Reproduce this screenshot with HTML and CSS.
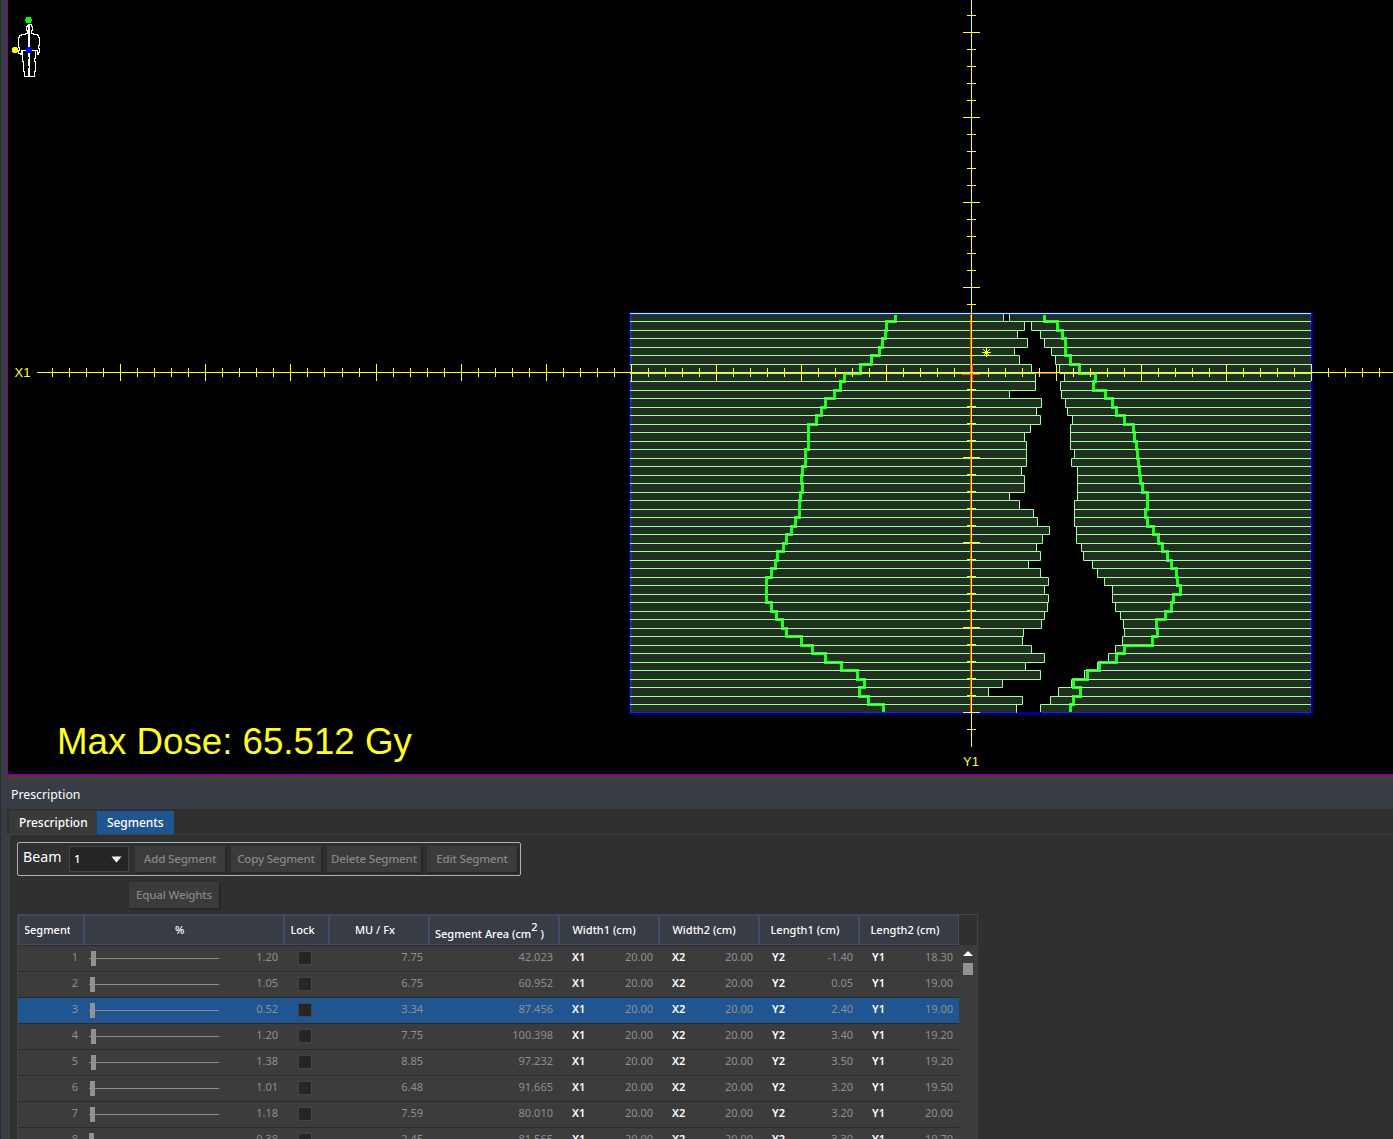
FILE: index.html
```html
<!DOCTYPE html>
<html lang="en">
<head>
<meta charset="utf-8">
<title>Beam Segments</title>
<link rel="stylesheet" href="styles.css">
</head>
<body>
<div class="app">
  <div class="gutter"></div>
  <main class="main">
    <section class="view">
      <svg class="bev" width="1386" height="774" viewBox="7 0 1386 774">
        <g class="body-icon" shape-rendering="crispEdges">
          <path d="M27.5 24.5h4v2h1v4h-1v3h2v1h4v1h1v2h1v8h-1v3h1v4h-1v2h-1v-4h-1v-1M27.5 24.5v2h-1v4h1v3h-2v1h-4v1h-2v2h-1v10h1v3h-1v3h2v1h1v-4h2M21.5 50.5h15M21.5 50.5v1h1v10h1v10h1v5h10v-5h1v-10h-1v-3h1v-8"/>
          <path d="M28.5 24V57M29.5 24V76M28.5 59V66M28.5 68V76"/>
          <circle class="dot-green" cx="28.500" cy="20" r="3.200"/>
          <circle class="dot-yellow" cx="15" cy="50" r="2.900"/>
          <circle class="dot-blue" cx="29" cy="50" r="2.900"/>
        </g>
        <g id="field"></g>
        <g id="axes"></g>
        <text class="axis-label" x="14.500" y="377">X1</text>
        <text class="axis-label" x="963" y="766">Y1</text>
        <text class="max-dose" x="57" y="754">Max Dose: 65.512 Gy</text>
      </svg>
    </section>
    <section class="panel">
      <h2 class="panel-title">Prescription</h2>
      <nav class="tabs">
        <span class="tab">Prescription</span>
        <span class="tab active">Segments</span>
      </nav>
      <div class="panel-body">
        <div class="toolbar">
          <span class="beam-label">Beam</span>
          <div class="select"><span>1</span><svg width="11" height="7" viewBox="0 0 11 7"><path d="M0.500 0.500h10l-5 6z" fill="#fff"/></svg></div>
          <button class="btn add">Add Segment</button>
          <button class="btn copy">Copy Segment</button>
          <button class="btn delete">Delete Segment</button>
          <button class="btn edit">Edit Segment</button>
        </div>
        <button class="btn equal">Equal Weights</button>
        <div class="grid">
          <div class="grid-main">
            <div class="row head">
              <span class="h seg"><b>Segment</b></span><span class="h pct">%</span><span class="h lock">Lock</span><span class="h mu">MU / Fx</span><span class="h area">Segment Area (cm<sup>2</sup>&nbsp;)</span><span class="h">Width1 (cm)</span><span class="h">Width2 (cm)</span><span class="h len">Length1 (cm)</span><span class="h len">Length2 (cm)</span>
            </div>
            <div id="rows"></div>
          </div>
          <div class="scroll">
            <svg width="10" height="5" viewBox="0 0 10 5"><path d="M0 5L5 0L10 5z" fill="#fff"/></svg>
            <div class="thumb"></div>
          </div>
        </div>
      </div>
    </section>
  </main>
</div>
<script src="app.js"></script>
</body>
</html>
```
FILE: styles.css
```css
* { box-sizing: border-box; }
body {
  margin: 0;
  background: #303030;
  color: #fff;
  font: 12px "Noto Sans", "Open Sans", sans-serif;
}
.app { display: flex; width: 1393px; height: 1139px; overflow: hidden; }
.gutter { width: 7px; flex: none; background: #383c44; border-left: 1px solid #2b2b2b; }
.main { width: 1386px; flex: none; display: flex; flex-direction: column; }
.view {
  height: 776px;
  flex: none;
  background: #000;
  border-bottom: 2px solid #900090;
  box-shadow: inset 1px 0 #900090;
}
.bev { display: block; }
.body-icon path { fill: none; stroke: #fff; }
.dot-green { fill: #00ff00; }
.dot-yellow { fill: #ffff00; }
.dot-blue { fill: #0000ff; }
.edge { fill: #000090; }
.edge-soft { fill: #203090; }
.leaf { fill: #202f20; stroke: #a0ffa0; }
.contour { fill: none; stroke: #20ff20; stroke-width: 3; }
.contour-line { fill: none; stroke: #78ff78; }
.axis { fill: none; stroke: #ffff20; }
.red { fill: none; stroke: #ff4030; }
.axis-label { fill: #ffff20; font: 13px "Liberation Sans", Arial, sans-serif; }
.max-dose { fill: #ffff20; font: 36.700px "Liberation Sans", Arial, sans-serif; }

.panel { flex: 1; min-height: 0; display: flex; flex-direction: column; padding-top: 6px; background: #404040; }
.panel-title {
  height: 27px;
  margin: 0;
  padding-left: 4px;
  flex: none;
  background: #383c45;
  font-size: 12.300px;
  font-weight: 400;
  line-height: 26px;
}
.tabs { display: flex; flex: none; height: 25px; padding: 2px 0 0 2px; background: #303030; }
.tab { width: 88px; padding-left: 10px; font-weight: 500; font-size: 11.900px; line-height: 23px; background: #3a3a3a; }
.tab.active { width: 77px; background: #1f5591; }
.panel-body {
  flex: 1;
  min-height: 0;
  overflow: hidden;
  margin-left: 2px;
  padding: 7px 0 0 7px;
  border-left: 1px solid #404040;
  border-top: 1px solid #404040;
  background: #303030;
}
.toolbar { display: flex; width: 504px; height: 34px; padding: 3px 0 0 5px; border: 1px solid #b0b0b0; border-radius: 2px; }
.beam-label { width: 46px; font-size: 14.200px; line-height: 21px; }
.select {
  display: flex;
  align-items: center;
  justify-content: space-between;
  width: 60px;
  height: 26px;
  padding: 0 6px 1px 4px;
  border: 1px solid #444;
  background: #252525;
  font-size: 11.500px;
  font-weight: 500;
}
.select svg { margin-top: 1px; }
.btn {
  height: 26px;
  padding: 0;
  border: 0;
  background: #3b3b3b;
  box-shadow: 1px 1px 2px #202020;
  color: #878787;
  font: 500 11.600px/26px "Noto Sans", sans-serif;
  letter-spacing: -0.200px;
  white-space: nowrap;
}
.add { width: 90px; margin-left: 6px; }
.copy { width: 90px; margin-left: 6px; }
.delete { width: 94px; margin-left: 6px; }
.edit { width: 90px; margin-left: 6px; }
.equal { display: block; width: 90px; margin: 6px 0 0 112px; }
.grid { display: flex; width: 961px; height: 300px; margin-top: 6px; border: 1px solid #444; background: #303030; }
.grid-main { width: 941px; flex: none; }
.row {
  display: grid;
  grid-template-columns: 66px 200px 45px 100px 130px 100px 100px 100px 100px;
  height: 26px;
  background: #3c3c3c;
  border-top: 1px solid #2b2b2b;
  font-size: 11px;
  line-height: 21px;
}
.head { height: 30px; border: 0; background: #383c45; font-weight: 500; line-height: 27px; }
.h { border: 1px solid #434c66; padding-left: 12.500px; white-space: nowrap; overflow: hidden; }
.h b { display: block; width: 45px; overflow: hidden; font-weight: 500; text-indent: -1px; }
.h.seg { padding-left: 6px; }
.h.pct { padding-left: 90px; }
.h.lock { padding-left: 5.500px; }
.h.mu { padding-left: 25px; }
.h.area { padding-left: 5px; line-height: 36px; }
.h.len { padding-left: 10.500px; }
.area sup { font-size: 11px; line-height: 0; vertical-align: 7px; }
.c { padding-right: 6px; text-align: right; color: #8f8f8f; }
.c.pair { display: flex; justify-content: space-between; padding-left: 13px; }
.pair b { color: #fff; font-weight: 600; }
.selected { background: #1f5591; }
.slide { display: flex; align-items: flex-start; justify-content: space-between; padding-left: 5px; }
.track { display: flex; align-items: center; width: 130px; height: 15px; margin-top: 5px; background: linear-gradient(#8c8c8c, #8c8c8c) 0 7px / 130px 1px no-repeat; }
.knob { width: 5px; height: 15px; background: #929292; }
.check { display: block; width: 14px; height: 14px; margin: 5px 0 0 14px; border: 1px solid #444; background: #252525; }
.scroll { flex: 1; margin-top: 30px; padding: 6px 0 0 4px; background: #3c3c3c; }
.scroll svg { display: block; }
.thumb { width: 10px; height: 12px; margin-top: 7px; background: #929292; }
```
FILE: app.js
```js
const leafA = [1003,1024,1017,1027,1014,1019,1031,1035,1035,1009,1041,1036,1040,1030,1024,1026,1026,1026,1021,1024,1024,1009,1019,1033,1037,1049,1042,1036,1040,1028,1040,1048,1044,1048,1047,1044,1041,1023,1022,1031,1044,1025,1040,1002,988,1022,1016];
const leafB = [1009,1031,1040,1044,1051,1055,1059,1064,1060,1061,1065,1067,1072,1070,1070,1070,1074,1071,1077,1077,1077,1077,1074,1074,1074,1076,1076,1081,1083,1092,1097,1104,1112,1112,1115,1120,1123,1124,1122,1115,1108,1097,1084,1071,1058,1050,1040];
const contourA = [895,886,885,882,879,871,860,844,840,834,825,821,816,808,808,808,805,805,802,801,802,800,799,799,795,791,786,783,777,775,771,766,766,766,771,776,782,786,801,812,825,841,857,864,859,868,883];
const contourB = [1044,1057,1062,1065,1065,1070,1079,1095,1093,1105,1112,1116,1124,1133,1134,1136,1137,1138,1139,1140,1142,1147,1147,1145,1147,1153,1158,1162,1167,1171,1176,1177,1180,1173,1171,1165,1156,1157,1152,1124,1116,1099,1087,1073,1080,1073,1070];

// Leaf edges snap away from the isocentre row
const rowY = i => 313 + (i < 7 || i === 47 ? Math.floor(8.5 * i) : Math.ceil(8.5 * i));
const line = (cls, d) => `<path class="${cls}" d="${d}"/>`;
const rect = (cls, x, y, w, h) => `<rect class="${cls}" x="${x}" y="${y}" width="${w}" height="${h}"/>`;

// Jaws and leaf pairs
let out = rect("edge", 629, 312, 684, 1) + rect("edge", 629, 312, 1, 403) +
  rect("edge", 1311, 313, 2, 402) + rect("edge", 629, 713, 684, 2) +
  rect("edge", 1004, 313, 6, 2);
let a = "", b = "";
leafA.forEach((x, i) => {
  const y = rowY(i) + 0.5, h = rowY(i + 1) - rowY(i);
  a += `M630 ${y}H${x + 0.5}v${h}H630`;
  b += `M1311 ${y}H${leafB[i] + 0.5}v${h}H1311`;
});
out += line("leaf", a) + line("leaf", b) + line("leaf", "M1003 313.5H1010");
out += rect("edge-soft", 630, 314, 373, 1) + rect("edge-soft", 1010, 314, 301, 1) +
  rect("edge-soft", 630, 314, 2, 399) + rect("edge-soft", 1310, 314, 1, 399) +
  rect("edge", 1017, 712, 24, 1) + rect("edge-soft", 630, 712, 386, 1) + rect("edge-soft", 1041, 712, 270, 1);
let ticksOnEdge = "";
for (let i = 1; i < 47; i++) ticksOnEdge += `M630 ${rowY(i) + 0.5}h2M1310 ${rowY(i) + 0.5}h1`;
out += line("leaf", ticksOnEdge);

// Target contours
for (const xs of [contourA, contourB]) {
  let d = `M${xs[0] + 0.5} 315`, thin = "";
  for (let i = 1; i < xs.length; i++) {
    const y = rowY(i) + 0.5;
    d += `V${y}H${xs[i] + 0.5}`;
    const lo = Math.min(xs[i - 1], xs[i]), hi = Math.max(xs[i - 1], xs[i]);
    if (lo !== hi) thin += `M${lo - 1} ${y}H${hi + 2}`;
  }
  out += line("contour", d + "V712") + line("contour-line", thin);
}
document.getElementById("field").innerHTML = out;

// Axes with ticks every centimetre
let ax = "M37 372.5H1393M971.5 0V747";
for (let k = -54; k <= 24; k++) {
  const x = Math.floor((k < 0 ? 971.75 : 971.5) + 17.02 * k), r = k % 5 ? 4 : 8;
  if (k) ax += `M${x + 0.5} ${372 - r}v${2 * r + 1}`;
}
for (let k = -21; k <= 21; k++) {
  const y = 372 + 17 * k, r = k % 5 ? 4 : 8;
  if (k) ax += `M${971 - r} ${y + 0.5}h${2 * r + 1}`;
}
const star = "M982 352.5h9M986.5 348v9M985 351.5h3M985 353.5h3M984 350.5h1M988 350.5h1M984 354.5h1M988 354.5h1M983 349.5h1M989 349.5h1M983 355.5h1M989 355.5h1";
document.getElementById("axes").innerHTML =
  line("red", "M970.5 315V712M962 374.5h18M972.500 364v17M1036 373.5h20") + line("axis", ax + star);

// Segment table
const data = [
  [1.20, "7.75", "42.023", "-1.40", "18.30", 2], [1.05, "6.75", "60.952", "0.05", "19.00", 1],
  [0.52, "3.34", "87.456", "2.40", "19.00", 1], [1.20, "7.75", "100.398", "3.40", "19.20", 2],
  [1.38, "8.85", "97.232", "3.50", "19.20", 2], [1.01, "6.48", "91.665", "3.20", "19.50", 1],
  [1.18, "7.59", "80.010", "3.20", "20.00", 1], [0.38, "2.45", "81.565", "3.30", "19.70", 0]
];
const pair = (n, v) => `<span class="c pair"><b>${n}</b>${v}</span>`;
document.getElementById("rows").innerHTML = data.map((r, i) =>
  `<div class="row${i === 2 ? " selected" : ""}"><span class="c">${i + 1}</span>` +
  `<span class="c slide"><span class="track"><i class="knob" style="margin-left:${r[5]}px"></i></span>${r[0].toFixed(2)}</span>` +
  `<span><i class="check"></i></span><span class="c">${r[1]}</span><span class="c">${r[2]}</span>` +
  pair("X1", "20.00") + pair("X2", "20.00") + pair("Y2", r[3]) + pair("Y1", r[4]) + `</div>`).join("");
```
